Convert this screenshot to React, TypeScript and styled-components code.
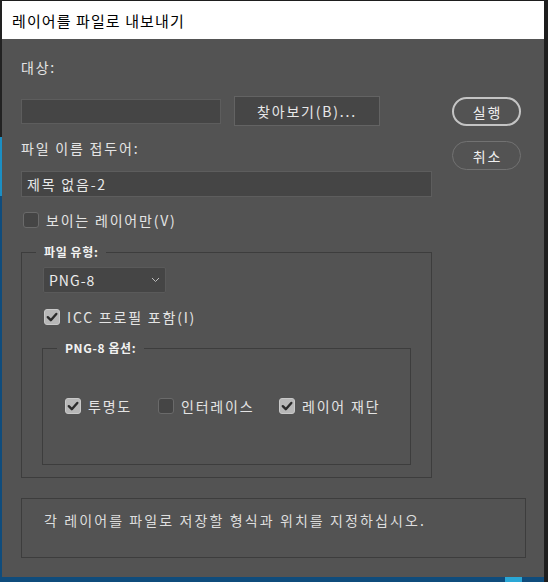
import React from "react";
import styled, { createGlobalStyle } from "styled-components";

const Global = createGlobalStyle`
  html, body { margin: 0; padding: 0; }
  body {
    width: 548px;
    height: 582px;
    overflow: hidden;
    background: #1e1e1e;
    font-family: "Noto Sans CJK KR", "Noto Sans", sans-serif;
  }
`;

const Screen = styled.div`
  width: 548px;
  height: 582px;
  box-sizing: border-box;
  padding: 1px 4px 5px 2px;
  background:
    linear-gradient(to bottom, #222 0 137px, #1b8fc4 137px 196px, #0f4c7c 196px) left top / 2px 100% no-repeat,
    linear-gradient(to right, #0f4c7c 0 505px, #2aa7d6 505px 522px, #0f4c7c 522px 544px, #1e1e1e 544px) left bottom / 100% 5px no-repeat,
    #1e1e1e;
`;

const Window = styled.div`
  width: 542px;
  height: 576px;
  display: flex;
  flex-direction: column;
  background: #535353;
`;

const TitleBar = styled.div`
  height: 38px;
  flex: none;
  background: #ffffff;
  display: flex;
  align-items: center;
  padding-left: 10px;
  font-size: 15px;
  letter-spacing: 1.1px;
  color: #000;
`;

const Content = styled.div`
  display: grid;
  grid-template-columns: 411px 69px;
  column-gap: 20px;
  align-content: start;
  padding: 18px 0 0 19px;
  color: #e4e4e4;
  font-size: 14px;
  letter-spacing: 1.8px;
`;

const MainColumn = styled.div`
  display: flex;
  flex-direction: column;
  align-items: flex-start;
`;

const Label = styled.div<{ $top?: number }>`
  height: 20px;
  line-height: 20px;
  margin-top: ${(p) => p.$top ?? 0}px;
`;

const BrowseRow = styled.div`
  display: flex;
  align-items: center;
  gap: 13px;
  height: 30px;
  margin-top: 19px;
`;

const TextField = styled.div<{ $w: number; $h: number; $top?: number }>`
  width: ${(p) => p.$w}px;
  height: ${(p) => p.$h}px;
  margin-top: ${(p) => p.$top ?? 0}px;
  box-sizing: border-box;
  background: #454545;
  border: 1px solid #5d5d5d;
  padding-left: 5px;
  display: flex;
  align-items: center;
  color: #e8e8e8;
`;

const BrowseButton = styled.div`
  width: 146px;
  height: 30px;
  box-sizing: border-box;
  background: #464646;
  border: 1px solid #636363;
  display: flex;
  align-items: center;
  justify-content: center;
  color: #e8e8e8;
`;

const CheckRow = styled.label<{ $top?: number; $left?: number }>`
  display: flex;
  align-items: center;
  height: 20px;
  margin-top: ${(p) => p.$top ?? 0}px;
  margin-left: ${(p) => p.$left ?? 0}px;
  gap: 7px;
  white-space: nowrap;
`;

const Box = styled.span<{ $on?: boolean }>`
  width: 16px;
  height: 16px;
  box-sizing: border-box;
  border-radius: 3px;
  flex: none;
  display: flex;
  align-items: center;
  justify-content: center;
  background: ${(p) => (p.$on ? "#b7b7b7" : "#454545")};
  border: 1px solid ${(p) => (p.$on ? "#c9c9c9" : "#6a6a6a")};
`;

const Group = styled.fieldset<{ $padL: number; $padT: number; $padB: number; $top: number }>`
  margin: ${(p) => p.$top}px 0 0 0;
  min-width: 0;
  box-sizing: border-box;
  width: 100%;
  border: 1px solid #3d3d3d;
  padding: ${(p) => p.$padT}px 20px ${(p) => p.$padB}px ${(p) => p.$padL}px;
  display: flex;
  flex-direction: column;
  align-items: flex-start;
`;

const Legend = styled.legend<{ $shift: number }>`
  margin-left: ${(p) => p.$shift}px;
  padding: 0 8px;
  height: 16px;
  line-height: 16px;
  font-size: 12px;
  font-weight: 700;
  letter-spacing: 0.6px;
  color: #f2f2f2;
`;

const Select = styled.div`
  width: 123px;
  height: 26px;
  margin-left: 1px;
  box-sizing: border-box;
  background: #454545;
  border: 1px solid #5a5a5a;
  border-radius: 2px;
  display: flex;
  align-items: center;
  justify-content: space-between;
  padding: 0 5px 0 5px;
  letter-spacing: 1px;
  color: #ececec;
`;

const OptionRow = styled.div`
  display: grid;
  grid-template-columns: 93px 121px auto;
  margin-left: 1px;
`;

const SideColumn = styled.div`
  display: flex;
  flex-direction: column;
  gap: 15px;
  margin-top: 40px;
`;

const PillButton = styled.div<{ $primary?: boolean }>`
  width: 69px;
  height: 29px;
  box-sizing: border-box;
  border-radius: 15px;
  border: ${(p) => (p.$primary ? "2px solid #c4c4c4" : "1px solid #727272")};
  display: flex;
  align-items: center;
  justify-content: center;
  padding-left: 2px;
  color: #f0f0f0;
`;

const StatusBox = styled.div`
  grid-column: 1 / -1;
  width: 505px;
  height: 60px;
  margin-top: 20px;
  box-sizing: border-box;
  border: 1px solid #3d3d3d;
  padding: 11px 0 0 22px;
  line-height: 20px;
  letter-spacing: 2.1px;
  color: #dedede;
`;

const Check = () => (
  <svg width="12" height="12" viewBox="0 0 12 12">
    <path d="M1.8 6.2 L4.8 9.2 L10.3 3" fill="none" stroke="#2b2b2b" strokeWidth="2.4" strokeLinecap="round" strokeLinejoin="round" />
  </svg>
);

const Chevron = () => (
  <svg width="9" height="6" viewBox="0 0 9 6">
    <path d="M1 1 L4.5 4.5 L8 1" fill="none" stroke="#bdbdbd" strokeWidth="1" />
  </svg>
);

const CheckItem = ({ on, text, top, left }: { on?: boolean; text: string; top?: number; left?: number }) => (
  <CheckRow $top={top} $left={left}>
    <Box $on={on}>{on && <Check />}</Box>
    <span>{text}</span>
  </CheckRow>
);

export default function App() {
  return (
    <>
      <Global />
      <Screen>
        <Window>
          <TitleBar>레이어를 파일로 내보내기</TitleBar>
          <Content>
            <MainColumn>
              <Label>대상:</Label>
              <BrowseRow>
                <TextField $w={200} $h={25} />
                <BrowseButton>찾아보기(B)...</BrowseButton>
              </BrowseRow>
              <Label $top={12}>파일 이름 접두어:</Label>
              <TextField $w={411} $h={26} $top={13}>제목 없음-2</TextField>
              <CheckItem text="보이는 레이어만(V)" top={13} left={2} />
              <Group $top={14} $padT={7} $padB={12} $padL={20}>
                <Legend $shift={-6}>파일 유형:</Legend>
                <Select>
                  <span>PNG-8</span>
                  <Chevron />
                </Select>
                <CheckItem on text="ICC 프로필 포함(I)" top={14} left={2} />
                <Group $top={13} $padT={40} $padB={48} $padL={21}>
                  <Legend $shift={-7}>PNG-8 옵션:</Legend>
                  <OptionRow>
                    <CheckItem on text="투명도" />
                    <CheckItem text="인터레이스" />
                    <CheckItem on text="레이어 재단" />
                  </OptionRow>
                </Group>
              </Group>
            </MainColumn>
            <SideColumn>
              <PillButton $primary>실행</PillButton>
              <PillButton>취소</PillButton>
            </SideColumn>
            <StatusBox>각 레이어를 파일로 저장할 형식과 위치를 지정하십시오.</StatusBox>
          </Content>
        </Window>
      </Screen>
    </>
  );
}
